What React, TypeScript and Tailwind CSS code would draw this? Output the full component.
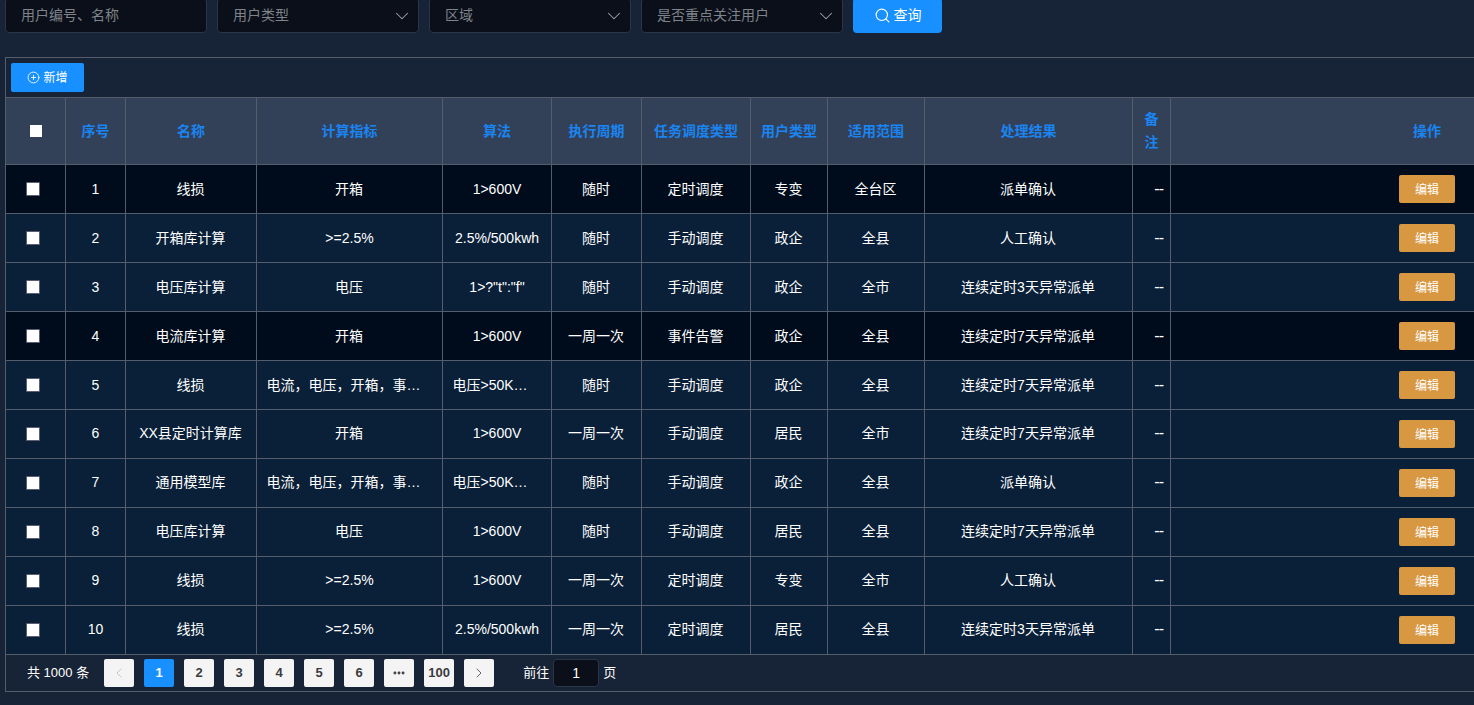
import { ChevronDown, ChevronLeft, ChevronRight, CirclePlus, Ellipsis, Search } from "lucide-react";

const rows = [
  ["1", "线损", "开箱", "1>600V", "随时", "定时调度", "专变", "全台区", "派单确认"],
  ["2", "开箱库计算", ">=2.5%", "2.5%/500kwh", "随时", "手动调度", "政企", "全县", "人工确认"],
  ["3", "电压库计算", "电压", '1>?"t":"f"', "随时", "手动调度", "政企", "全市", "连续定时3天异常派单"],
  ["4", "电流库计算", "开箱", "1>600V", "一周一次", "事件告警", "政企", "全县", "连续定时7天异常派单"],
  ["5", "线损", "电流，电压，开箱，事件告警", "电压>50KWh，电流>100A", "随时", "手动调度", "政企", "全县", "连续定时7天异常派单"],
  ["6", "XX县定时计算库", "开箱", "1>600V", "一周一次", "手动调度", "居民", "全市", "连续定时7天异常派单"],
  ["7", "通用模型库", "电流，电压，开箱，事件告警", "电压>50KWh，电流>100A", "随时", "手动调度", "政企", "全县", "派单确认"],
  ["8", "电压库计算", "电压", "1>600V", "随时", "手动调度", "居民", "全县", "连续定时7天异常派单"],
  ["9", "线损", ">=2.5%", "1>600V", "一周一次", "定时调度", "专变", "全市", "人工确认"],
  ["10", "线损", ">=2.5%", "2.5%/500kwh", "一周一次", "定时调度", "居民", "全县", "连续定时3天异常派单"],
];

const headers = ["序号", "名称", "计算指标", "算法", "执行周期", "任务调度类型", "用户类型", "适用范围", "处理结果"];

function Select({ label }: { label: string }) {
  return (
    <div className="flex h-[35px] w-[202px] items-center justify-between rounded-[4px] border border-[#2b3547] bg-[#0a0f19] pl-[15px] pr-[5px] text-[#7f838a]">
      <span>{label}</span>
      <ChevronDown size={22} strokeWidth={1.1} className="text-[#a2a6ad]" />
    </div>
  );
}

function PageBtn({ children, active, muted }: { children: React.ReactNode; active?: boolean; muted?: boolean }) {
  return (
    <div
      className={
        active
          ? "flex h-[28px] w-[30px] items-center justify-center rounded-[2px] bg-[#1890ff] text-[13px] font-bold text-white"
          : muted
            ? "flex h-[28px] w-[30px] items-center justify-center rounded-[2px] bg-[#f4f4f5] text-[#c0c4cc]"
            : "flex h-[28px] w-[30px] items-center justify-center rounded-[2px] bg-[#f4f4f5] text-[13px] font-bold text-[#3a3c40]"
      }
    >
      {children}
    </div>
  );
}

function isLatin(s: string) {
  return /^[\x00-\x7f]+$/.test(s);
}

export default function App() {
  return (
    <div className="h-[705px] w-full overflow-hidden bg-[#172336] pl-[5px] font-['Liberation_Sans','Noto_Sans_CJK_SC',sans-serif] text-[14px] text-white">
      <div className="-mt-[2px] flex gap-[10px]">
        <div className="flex h-[35px] w-[202px] items-center rounded-[4px] border border-[#2b3547] bg-[#0a0f19] pl-[15px] text-[#7f838a]">
          用户编号、名称
        </div>
        <Select label="用户类型" />
        <Select label="区域" />
        <Select label="是否重点关注用户" />
        <button className="flex h-[35px] w-[89px] items-center justify-center gap-[3px] rounded-[4px] bg-[#1890ff] text-white">
          <Search size={17} strokeWidth={1.6} />
          查询
        </button>
      </div>

      <div className="mt-[24px] border-l border-t border-[#555c6b]">
        <div className="flex h-[40px] items-center border-b border-[#555c6b] pl-[5px]">
          <button className="flex h-[29px] w-[73px] items-center justify-center gap-[3px] rounded-[2px] bg-[#1890ff] text-[12px]">
            <CirclePlus size={13} strokeWidth={1.6} />
            新增
          </button>
        </div>

        <table className="w-full table-fixed border-separate border-spacing-0">
          <colgroup>
            <col className="w-[60px]" />
            <col className="w-[60px]" />
            <col className="w-[131px]" />
            <col className="w-[186px]" />
            <col className="w-[109px]" />
            <col className="w-[90px]" />
            <col className="w-[109px]" />
            <col className="w-[77px]" />
            <col className="w-[97px]" />
            <col className="w-[208px]" />
            <col className="w-[38px]" />
            <col />
          </colgroup>
          <thead>
            <tr className="h-[67px] bg-[#324157] text-[#1a84f2]">
              <th className="border-b border-r border-[#555c6b] p-0">
                <input type="checkbox" className="ml-[24px] block h-[12px] w-[12px] appearance-none bg-white" />
              </th>
              {headers.map((h) => (
                <th key={h} className="border-b border-r border-[#555c6b] p-0 font-bold">
                  {h}
                </th>
              ))}
              <th className="border-b border-r border-[#555c6b] px-[10px] font-bold leading-[23px]">备注</th>
              <th className="border-b border-[#555c6b] pr-[33px] text-right font-bold">操作</th>
            </tr>
          </thead>
          <tbody>
            {rows.map((r, i) => (
              <tr key={r[0]} className={i === 0 || i === 3 ? "h-[49px] bg-[#000c1c]" : "h-[49px] bg-[#0a1f38]"}>
                <td className="border-b border-r border-[#555c6b] p-0">
                  <input type="checkbox" className="ml-[20px] block h-[14px] w-[14px] appearance-none rounded-[1px] border border-[#5a6070] bg-white" />
                </td>
                {r.map((c, j) => (
                  <td
                    key={j}
                    className={[
                      "truncate border-b border-r border-[#555c6b] text-center",
                      i >= 5 ? "pb-[2px]" : "",
                      isLatin(c) ? "px-[10px]" : "pl-[9.5px] pr-[10.5px]",
                    ].join(" ")}
                  >
                    {c}
                  </td>
                ))}
                <td
                  className={
                    i >= 5
                      ? "border-b border-r border-[#555c6b] pb-[2px] pr-[7px] text-right text-[16px] tracking-[-1px]"
                      : "border-b border-r border-[#555c6b] pr-[7px] text-right text-[16px] tracking-[-1px]"
                  }
                >
                  --
                </td>
                <td className="border-b border-[#555c6b] p-0">
                  <div className="flex justify-end pr-[19px]">
                    <button className="h-[28px] w-[56px] rounded-[2px] bg-[#d89741] pt-[2px] text-[12px] text-white">编辑</button>
                  </div>
                </td>
              </tr>
            ))}
          </tbody>
        </table>

        <div className="flex h-[37px] items-center border-b border-[#555c6b] pl-[21px] text-[13px]">
          <span className="mr-[15px]">共 1000 条</span>
          <div className="flex gap-[10px]">
            <PageBtn muted>
              <ChevronLeft size={16} strokeWidth={1.5} />
            </PageBtn>
            <PageBtn active>1</PageBtn>
            <PageBtn>2</PageBtn>
            <PageBtn>3</PageBtn>
            <PageBtn>4</PageBtn>
            <PageBtn>5</PageBtn>
            <PageBtn>6</PageBtn>
            <PageBtn>
              <Ellipsis size={14} strokeWidth={3} />
            </PageBtn>
            <PageBtn>100</PageBtn>
            <PageBtn>
              <ChevronRight size={16} strokeWidth={1.5} className="text-[#606266]" />
            </PageBtn>
          </div>
          <span className="ml-[29px]">前往</span>
          <div className="ml-[4px] flex h-[28px] w-[46px] items-center justify-center rounded-[4px] border border-[#2b3547] bg-[#0a0f19] text-[14px]">1</div>
          <span className="ml-[4px]">页</span>
        </div>
      </div>
    </div>
  );
}
